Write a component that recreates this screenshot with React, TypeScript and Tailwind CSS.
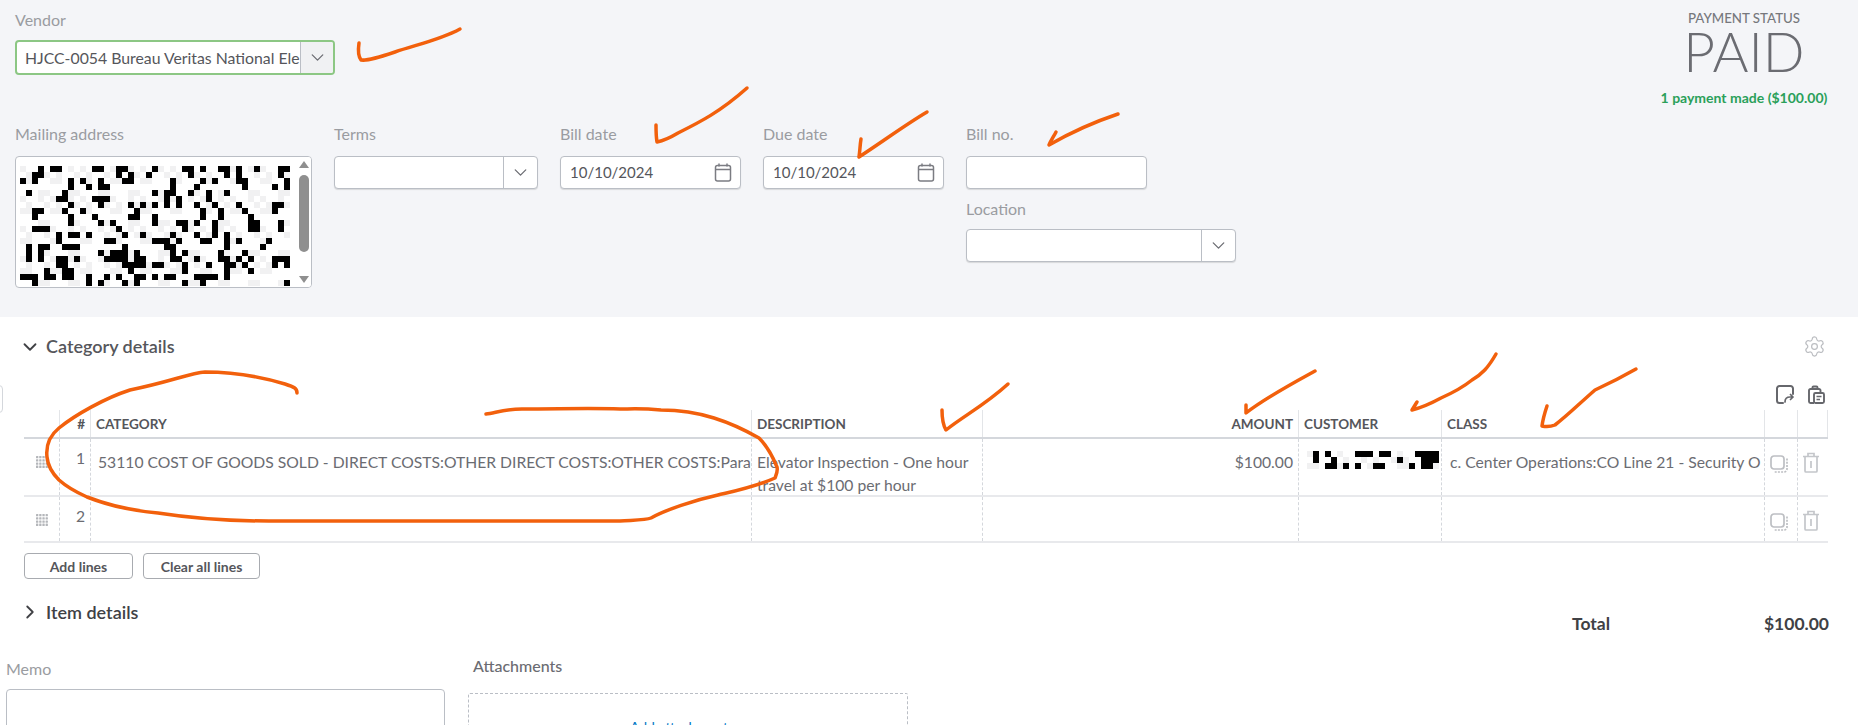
import { ChevronDown, ChevronRight, Settings } from "lucide-react";
import type { ReactNode } from "react";

// redacted blocks, copied row by row as column numbers
const addressRows = [
  [3, 5, 6, 12, 13, 16, 17, 22, 27, 28, 30, 33, 34, 36, 39, 43, 44],
  [2, 3, 16, 18, 21, 28, 34, 36, 43],
  [0, 2, 8, 10, 13, 17, 18, 25, 30, 32, 36, 37, 44],
  [8, 11, 13, 14, 25, 29, 37, 42, 44],
  [1, 7, 22, 24, 25, 28, 31, 34],
  [6, 7, 12, 13, 14, 24, 26, 31],
  [8, 13, 18, 20, 22, 24, 26, 29, 32, 36, 42, 43],
  [2, 3, 7, 10, 19, 30, 33, 37, 42],
  [2, 8, 12, 18, 19, 22, 30, 33, 38],
  [8, 13, 15, 22, 26, 27, 29, 32, 38, 39, 43],
  [2, 3, 4, 16, 27, 32, 38, 39, 43],
  [6, 8, 9, 11, 17, 20, 25, 29, 32, 34],
  [6, 14, 15, 22, 23, 24, 26, 30, 31, 34, 36, 41],
  [1, 3, 4, 7, 8, 9, 17, 24, 25, 34, 40],
  [1, 3, 13, 15, 16, 17, 19, 25, 27, 33, 37],
  [1, 3, 6, 7, 9, 14, 15, 16, 17, 19, 20, 25, 26, 29, 33, 34, 36, 38, 42, 43, 44],
  [6, 7, 17, 18, 19, 20, 22, 23, 27, 31, 34, 35, 37, 42, 44],
  [4, 7, 8, 18, 27, 34, 38],
  [0, 1, 2, 4, 5, 7, 8, 11, 14, 16, 19, 20, 22, 24, 25, 29, 30, 31, 32, 34],
  [2, 11, 13, 17, 19, 27, 30, 44],
];

const customerRows = [
  [1, 3, 8, 9, 10, 12, 13, 18, 19, 20, 21],
  [1, 4, 15, 19, 20, 21],
  [3, 4, 6, 8, 11, 12, 17, 19, 20],
];

const isLight = (col: number, row: number) => (col * 7 + row * 13 + col * row) % 5 < 2;

function Pixels({ rows, cols, cell }: { rows: number[][]; cols: number; cell: number }) {
  return (
    <svg width={cols * cell} height={rows.length * cell} className="block">
      {rows.map((row, r) =>
        Array.from({ length: cols }).map((_, c) =>
          isLight(c, r) ? <rect key={`l${r}-${c}`} x={c * cell} y={r * cell} width={cell} height={cell} fill="#f1f1f2" /> : null
        )
      )}
      {rows.map((row, r) =>
        row.map((c) => <rect key={`b${r}-${c}`} x={c * cell} y={r * cell} width={cell} height={cell} fill="#000" />)
      )}
    </svg>
  );
}

const Label = ({ children, className = "" }: { children: ReactNode; className?: string }) => (
  <div className={`h-[18px] text-[16px] leading-[18px] text-[#9a9ca1] ${className}`}>{children}</div>
);

const Select = ({ width, text }: { width: string; text?: string }) => (
  <div className={`flex h-[33px] ${width} overflow-hidden rounded-[4px] border border-[#babec5] bg-white shadow-[0_1px_1px_rgba(0,0,0,0.12)]`}>
    <div className="flex-1 truncate px-2 text-[15px] leading-[31px] text-[#55565b]">{text}</div>
    <div className="flex w-[34px] items-center justify-center border-l border-[#babec5]">
      <ChevronDown size={21} strokeWidth={1.5} className="text-[#6b6c72]" />
    </div>
  </div>
);

const CalendarIcon = () => (
  <svg width="18" height="19" viewBox="0 0 18 19" fill="none" stroke="#7b7c82" strokeWidth="1.5">
    <rect x="1.5" y="2.5" width="15" height="15.5" rx="2" />
    <path d="M1.5 6.5h15M5 .5v3M13 .5v3" />
  </svg>
);

const DateField = ({ value }: { value: string }) => (
  <div className="flex h-[33px] w-[181px] items-center justify-between rounded-[4px] border border-[#babec5] bg-white pr-[8px] pl-[9px] shadow-[0_1px_1px_rgba(0,0,0,0.12)]">
    <span className="text-[15px] text-[#55565b]">{value}</span>
    <CalendarIcon />
  </div>
);

const CopyIcon = () => (
  <svg width="20" height="19" viewBox="0 0 20 19" fill="none" stroke="#bdbfc3" strokeWidth="1.7">
    <rect x="1" y="1" width="13" height="13" rx="3" />
    <path d="M17 3.500V14a3 3 0 0 1-3 3H4.500" strokeDasharray="2 1.200" />
  </svg>
);

const TrashIcon = () => (
  <svg width="18" height="21" viewBox="0 0 18 21" fill="none" stroke="#c4c6ca" strokeWidth="1.7">
    <path d="M1 4.500h16M6 4.500V1.500h6v3M3 4.500V19a1 1 0 0 0 1 1h10a1 1 0 0 0 1-1V4.500M9 9v7" />
  </svg>
);

const Grip = () => (
  <svg width="12" height="12" fill="#b4b6ba">
    {[0, 1, 2, 3].map((r) => [0, 1, 2, 3].map((c) => <rect key={`${r}${c}`} x={c * 3.2} y={r * 3.2} width="2.300" height="2.300" rx="0.500" />))}
  </svg>
);

const headCell = "flex items-center overflow-hidden whitespace-nowrap border-l border-[#e3e5e8] px-[5px] pt-[2px] text-[13.500px] font-bold text-[#55565b]";
const bodyCell = "overflow-hidden border-l border-dashed border-[#d4d7dc] px-[5px] text-[15.700px] leading-[23px] text-[#6b6c72]";
const tableCols = "grid grid-cols-[35px_31px_661px_231px_316px_143px_323px_33px_31px]";

const LineRow = ({ num, height, category, description, amount, customer, lineClass }: {
  num: number;
  height: string;
  category?: string;
  description?: string;
  amount?: string;
  customer?: ReactNode;
  lineClass?: string;
}) => (
  <div className={`${tableCols} ${height} border-b-2 border-[#e8e9ec]`}>
    <div className="pt-[17px] pl-[12px]"><Grip /></div>
    <div className={`${bodyCell} pt-[8px] text-right text-[14px]`}>{num}</div>
    <div className={`${bodyCell} pt-[12px] pl-[7px] whitespace-nowrap`}>{category}</div>
    <div className={`${bodyCell} pt-[12px]`}>{description}</div>
    <div className={`${bodyCell} pt-[12px] text-right`}>{amount}</div>
    <div className={`${bodyCell} pt-[12px] pl-[8px]`}>{customer}</div>
    <div className={`${bodyCell} pt-[12px] pl-[8px] whitespace-nowrap`}>{lineClass}</div>
    <div className={`${bodyCell} pt-[16px] pl-[5px]`}><CopyIcon /></div>
    <div className={`${bodyCell} pt-[13px] pl-[4px]`}><TrashIcon /></div>
  </div>
);

export default function App() {
  const columns = [
    { name: "", cls: "border-l-0" },
    { name: "#", cls: "justify-end" },
    { name: "CATEGORY", cls: "" },
    { name: "DESCRIPTION", cls: "" },
    { name: "AMOUNT", cls: "justify-end" },
    { name: "CUSTOMER", cls: "" },
    { name: "CLASS", cls: "" },
    { name: "", cls: "" },
    { name: "", cls: "border-r border-r-[#e3e5e8]" },
  ];

  return (
    <div className="relative h-[725px] w-[1858px] overflow-hidden bg-white font-['Lato',sans-serif]">
      <section className="h-[317px] bg-[#f4f5f8] pt-[11px] pl-[15px]">
        <div className="flex h-[114px] justify-between pr-[30px]">
          <div>
            <Label className="mb-[11px]">Vendor</Label>
            <div className="flex h-[35px] w-[320px] overflow-hidden rounded-[4px] border-2 border-[#8cc784] bg-white">
              <div className="flex-1 overflow-hidden px-[8px] text-[15.800px] leading-[31px] whitespace-nowrap text-[#55565b]">
                HJCC-0054 Bureau Veritas National Ele
              </div>
              <div className="flex w-[33px] items-center justify-center border-l border-[#babec5] bg-[#f0f1f3]">
                <ChevronDown size={21} strokeWidth={1.5} className="text-[#6b6c72]" />
              </div>
            </div>
          </div>
          <div className="flex w-[168px] flex-col items-center">
            <div className="text-[13.300px] leading-[14px] font-medium text-[#77787d]">PAYMENT STATUS</div>
            <div className="text-[55px] leading-[52px] font-light text-[#6b6c72]">PAID</div>
            <div className="mt-[13px] text-[14px] leading-[16px] font-bold whitespace-nowrap text-[#2aa05a]">1 payment made ($100.00)</div>
          </div>
        </div>

        <div className="flex">
          <div className="w-[319px]">
            <Label className="mb-[13px]">Mailing address</Label>
            <div className="relative h-[132px] w-[297px] overflow-hidden rounded-[4px] border border-[#babec5] bg-white pt-[9px] pl-[4px]">
              <Pixels rows={addressRows} cols={45} cell={6} />
              <div className="absolute top-0 right-0 flex h-full w-[14px] flex-col items-center justify-between bg-white py-[4px]">
                <div className="h-0 w-0 border-x-[5px] border-b-[7px] border-x-transparent border-b-[#8f8f8f]" />
                <div className="mb-[18px] h-[77px] w-[10px] rounded-full bg-[#8f8f8f]" />
                <div className="h-0 w-0 border-x-[5px] border-t-[7px] border-x-transparent border-t-[#8f8f8f]" />
              </div>
            </div>
          </div>
          <div className="w-[226px]">
            <Label className="mb-[13px]">Terms</Label>
            <Select width="w-[204px]" />
          </div>
          <div className="w-[203px]">
            <Label className="mb-[13px]">Bill date</Label>
            <DateField value="10/10/2024" />
          </div>
          <div className="w-[203px]">
            <Label className="mb-[13px]">Due date</Label>
            <DateField value="10/10/2024" />
          </div>
          <div>
            <Label className="mb-[13px]">Bill no.</Label>
            <div className="h-[33px] w-[181px] rounded-[4px] border border-[#babec5] bg-white shadow-[0_1px_1px_rgba(0,0,0,0.12)]" />
            <Label className="mt-[11px] mb-[11px]">Location</Label>
            <Select width="w-[270px]" />
          </div>
        </div>
      </section>

      <section className="pl-[24px]">
        <div className="flex h-[61px] items-center justify-between pr-[32px] pb-[2px]">
          <div className="-ml-[5px] flex items-center gap-[5px] text-[18px] font-semibold text-[#55565b]">
            <ChevronDown size={22} strokeWidth={2} className="text-[#404145]" />
            Category details
          </div>
          <Settings size={23} strokeWidth={1.25} className="text-[#bbbdc1]" />
        </div>

        <div className="flex h-[32px] items-center justify-end gap-[14px] pr-[33px]">
          <svg width="18" height="19" viewBox="0 0 18 19" fill="none" stroke="#66676c" strokeWidth="2" strokeLinecap="round" strokeLinejoin="round">
            <path d="M7 18H3.500A2.500 2.500 0 0 1 1 15.500v-12A2.500 2.500 0 0 1 3.500 1h11A2.500 2.500 0 0 1 17 3.500V9" />
            <path d="M9 17c0-3 2-5 5-5h3m-2.500-2.500L17 12l-2.500 2.500" strokeWidth="1.700" />
          </svg>
          <svg width="17" height="19" viewBox="0 0 17 19" fill="none" stroke="#66676c" strokeWidth="1.900" strokeLinejoin="round">
            <path d="M4 4H2.500A1.500 1.500 0 0 0 1 5.500v11A1.500 1.500 0 0 0 2.500 18H6M4.500 4V2.500a1 1 0 0 1 1-1h3a1 1 0 0 1 1 1V4zM9.500 4H11a1.500 1.500 0 0 1 1.500 1.500V7" />
            <rect x="6" y="8" width="10" height="10" rx="1.500" />
            <path d="M8.500 11.500h5M8.500 14.500h3.500" strokeWidth="1.400" />
          </svg>
        </div>

        <div className="w-[1804px]">
          <div className={`${tableCols} h-[29px] border-b-2 border-[#d4d7dc]`}>
            {columns.map((col, index) => (
              <div key={index} className={`${headCell} ${col.cls}`}>{col.name}</div>
            ))}
          </div>
          <LineRow
            num={1}
            height="h-[58px]"
            category="53110 COST OF GOODS SOLD - DIRECT COSTS:OTHER DIRECT COSTS:OTHER COSTS:Para"
            description="Elevator Inspection - One hour travel at $100 per hour"
            amount="$100.00"
            customer={<Pixels rows={customerRows} cols={22} cell={6} />}
            lineClass="c. Center Operations:CO Line 21 - Security O"
          />
          <LineRow num={2} height="h-[46px]" />
        </div>

        <div className="mt-[10px] flex gap-[10px]">
          <button className="h-[26px] w-[109px] rounded-[4px] border border-[#a8abb0] text-[14px] font-bold text-[#55565b]">Add lines</button>
          <button className="h-[26px] w-[117px] rounded-[4px] border border-[#a8abb0] text-[14px] font-bold text-[#55565b]">Clear all lines</button>
        </div>

        <div className="flex h-[77px] justify-between pr-[29px]">
          <div className="-ml-[5px] flex items-start gap-[5px] pt-[22px] text-[18px] leading-[22px] font-semibold text-[#404145]">
            <ChevronRight size={22} strokeWidth={2} className="text-[#404145]" />
            Item details
          </div>
          <div className="flex w-[257px] justify-between pt-[36px] text-[17.500px] leading-[18px] font-bold text-[#404145]">
            <span>Total</span>
            <span>$100.00</span>
          </div>
        </div>
      </section>

      <section className="flex gap-[23px] pl-[6px]">
        <div>
          <Label className="mt-[4px] mb-[11px]">Memo</Label>
          <div className="h-[120px] w-[439px] rounded-[4px] border border-[#babec5]" />
        </div>
        <div>
          <div className="mt-[1px] ml-[5px] h-[18px] text-[16px] leading-[18px] font-medium text-[#6b6c72]">Attachments</div>
          <div className="mt-[18px] h-[120px] w-[440px] rounded-[2px] border border-dashed border-[#babec5] pt-[22px] pr-[18px] text-center text-[14px] text-[#0077c5]">
            Add attachment
          </div>
        </div>
      </section>

      <div className="absolute top-[385px] left-[-6px] h-[28px] w-[9px] rounded-[4px] border border-[#d4d7dc]" />

      {/* hand drawn marks on top of the screenshot */}
      <svg className="pointer-events-none absolute inset-0" width="1858" height="725" fill="none" stroke="#f2600c" strokeWidth="3.500" strokeLinecap="round" strokeLinejoin="round">
        <path d="M460 29C440 40 415 45 395 52C380 57 368 61 361 60C358 56 358 50 359 43" />
        <path d="M747 88C720 112 700 122 678 133C668 139 662 141 657 142C656 136 656 130 656 125" />
        <path d="M927 112C905 125 885 140 859 157C860 150 860 145 861 139" />
        <path d="M1118 114C1100 120 1075 130 1049 145C1051 140 1054 136 1056 132" />
        <path d="M297 393C297 388 294 387 285 384C265 378 235 372 205 372C190 373 170 382 130 390C105 398 75 415 59 428C48 437 46 448 47 457C48 468 55 476 59 480C68 488 78 493 87 497C110 506 135 511 158 513C190 518 230 521 269 521L620 521C635 520 646 520 651 518C665 510 695 500 718 495C735 491 755 487 775 478C777 473 778 471 777 467C772 455 766 445 759 438C745 430 730 423 714 418C695 412 680 410 661 410C640 408 630 409 620 409C590 408 560 409 522 409C505 409 495 413 486 414" />
        <path d="M1008 384C985 405 965 415 946 430C943 425 942 418 942 410" />
        <path d="M1315 371C1295 382 1265 398 1246 413C1246 410 1246 408 1246 405" />
        <path d="M1496 354C1488 368 1482 374 1472 380C1462 388 1450 394 1441 398C1430 404 1420 408 1412 410C1414 407 1415 405 1417 402" />
        <path d="M1636 369C1622 377 1608 384 1595 390C1580 403 1568 415 1555 425C1550 427 1546 427 1542 426C1543 418 1545 412 1547 406" />
      </svg>
    </div>
  );
}
